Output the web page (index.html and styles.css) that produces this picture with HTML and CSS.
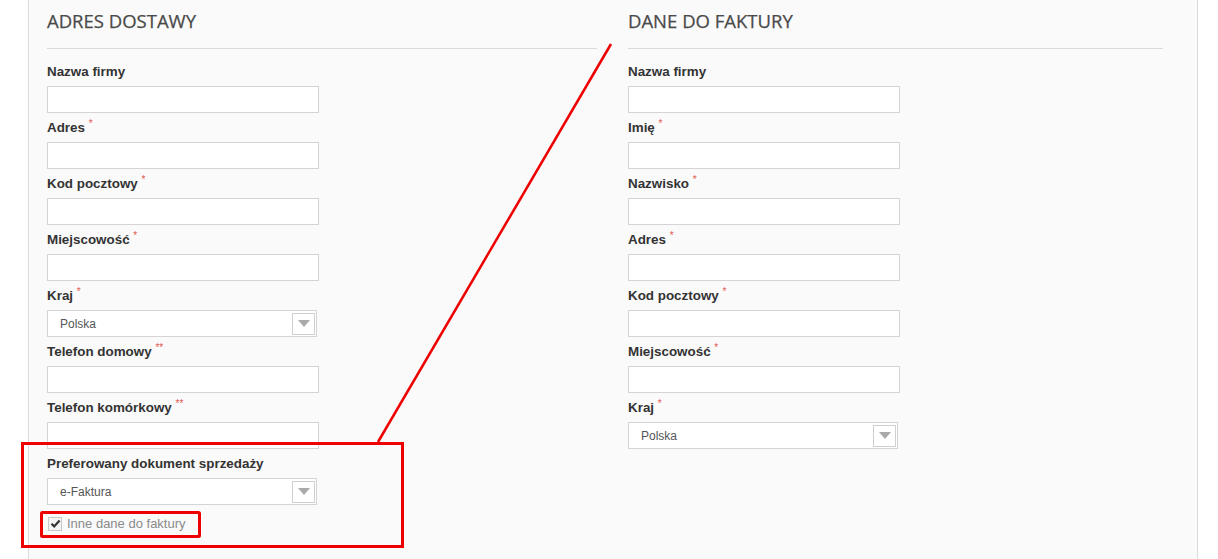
FILE: index.html
```html
<!DOCTYPE html>
<html lang="pl">
<head>
<meta charset="utf-8">
<title>Adres dostawy</title>
<link rel="stylesheet" href="styles.css">
</head>
<body>
<div class="panel">
  <div class="columns">
    <section class="col col-left">
      <h2 class="col-title">ADRES DOSTAWY</h2>
      <div class="field"><label>Nazwa firmy</label><div class="input"></div></div>
      <div class="field"><label>Adres <span class="req">*</span></label><div class="input"></div></div>
      <div class="field"><label>Kod pocztowy <span class="req">*</span></label><div class="input"></div></div>
      <div class="field"><label>Miejscowość <span class="req">*</span></label><div class="input"></div></div>
      <div class="field"><label>Kraj <span class="req">*</span></label>
        <div class="select"><span class="select-value">Polska</span><span class="select-btn"><span class="tri"></span></span></div></div>
      <div class="field"><label>Telefon domowy <span class="req">**</span></label><div class="input"></div></div>
      <div class="field"><label>Telefon komórkowy <span class="req">**</span></label><div class="input"></div></div>
      <div class="field"><label>Preferowany dokument sprzedaży</label>
        <div class="select"><span class="select-value">e-Faktura</span><span class="select-btn"><span class="tri"></span></span></div></div>
      <div class="check-row">
        <span class="checkbox"><svg width="11" height="11" viewBox="0 0 11 11"><path d="M1.5 5.8 L4.2 8.4 L9.6 2.4" fill="none" stroke="#333" stroke-width="2.2"/></svg></span>
        <span class="check-label">Inne dane do faktury</span>
      </div>
    </section>
    <section class="col col-right">
      <h2 class="col-title">DANE DO FAKTURY</h2>
      <div class="field"><label>Nazwa firmy</label><div class="input"></div></div>
      <div class="field"><label>Imię <span class="req">*</span></label><div class="input"></div></div>
      <div class="field"><label>Nazwisko <span class="req">*</span></label><div class="input"></div></div>
      <div class="field"><label>Adres <span class="req">*</span></label><div class="input"></div></div>
      <div class="field"><label>Kod pocztowy <span class="req">*</span></label><div class="input"></div></div>
      <div class="field"><label>Miejscowość <span class="req">*</span></label><div class="input"></div></div>
      <div class="field"><label>Kraj <span class="req">*</span></label>
        <div class="select"><span class="select-value">Polska</span><span class="select-btn"><span class="tri"></span></span></div></div>
    </section>
  </div>
</div>
<svg class="annot" width="1218" height="559" viewBox="0 0 1218 559">
  <line x1="611" y1="44" x2="378" y2="442" stroke="#e00" stroke-width="2.5"/>
  <rect x="22.5" y="443.5" width="380" height="103" fill="none" stroke="#e00" stroke-width="3"/>
  <rect x="41.5" y="512.5" width="158" height="24" fill="none" stroke="#e00" stroke-width="3" rx="1"/>
</svg>
</body>
</html>
```
FILE: styles.css
```css
html, body {
  margin: 0;
  padding: 0;
  background: #fff;
}
body {
  width: 1218px;
  height: 559px;
  overflow: hidden;
  position: relative;
  font-family: "Liberation Sans", Arial, sans-serif;
}
.panel {
  margin-left: 28px;
  width: 1170px;
  height: 559px;
  box-sizing: border-box;
  border-left: 1px solid #dcdcdc;
  border-right: 1px solid #dcdcdc;
  background: #fafafa;
  padding: 9px 0 0 18px;
}
.columns {
  display: grid;
  grid-template-columns: 550px 535px;
  column-gap: 31px;
}
.col-title {
  margin: 0 0 13px;
  font-family: "Open Sans", sans-serif;
  font-weight: 400;
  font-size: 18.5px;
  line-height: 24px;
  color: #4a4a4a;
  padding-bottom: 15px;
  border-bottom: 1px solid #dadada;
  -webkit-text-stroke: 0.25px #4a4a4a;
}
.field {
  margin-bottom: 5px;
}
.field label {
  display: block;
  height: 17px;
  font-size: 13.4px;
  font-weight: bold;
  line-height: 19px;
  color: #333;
  margin-bottom: 7px;
}
.req {
  color: #e0574f;
  font-size: 10px;
  line-height: 0;
  font-weight: normal;
  vertical-align: 5px;
}
.input {
  width: 272px;
  height: 27px;
  box-sizing: border-box;
  border: 1px solid #d4d4d4;
  background: #fff;
}
.select {
  width: 270px;
  height: 27px;
  box-sizing: border-box;
  border: 1px solid #d4d4d4;
  background: #fff;
  display: flex;
  align-items: center;
  justify-content: space-between;
  padding: 0 1px 0 12px;
}
.select-value {
  font-size: 12px;
  color: #555;
}
.select-btn {
  width: 23px;
  height: 22px;
  box-sizing: border-box;
  border: 1px solid #cfcfcf;
  background: #fff;
  display: flex;
  align-items: center;
  justify-content: center;
}
.tri {
  width: 0;
  height: 0;
  border-left: 6px solid transparent;
  border-right: 6px solid transparent;
  border-top: 7px solid #a9a9a9;
}
.check-row {
  display: flex;
  align-items: center;
  margin-top: 11px;
  padding-left: 1px;
}
.checkbox {
  width: 14px;
  height: 14px;
  box-sizing: border-box;
  border: 1px solid #c9c9c9;
  background: #f4f4f4;
  display: flex;
  align-items: center;
  justify-content: center;
}
.check-label {
  margin-left: 5px;
  font-size: 13px;
  color: #8a8a8a;
}
.annot {
  position: absolute;
  left: 0;
  top: 0;
  pointer-events: none;
}
```
